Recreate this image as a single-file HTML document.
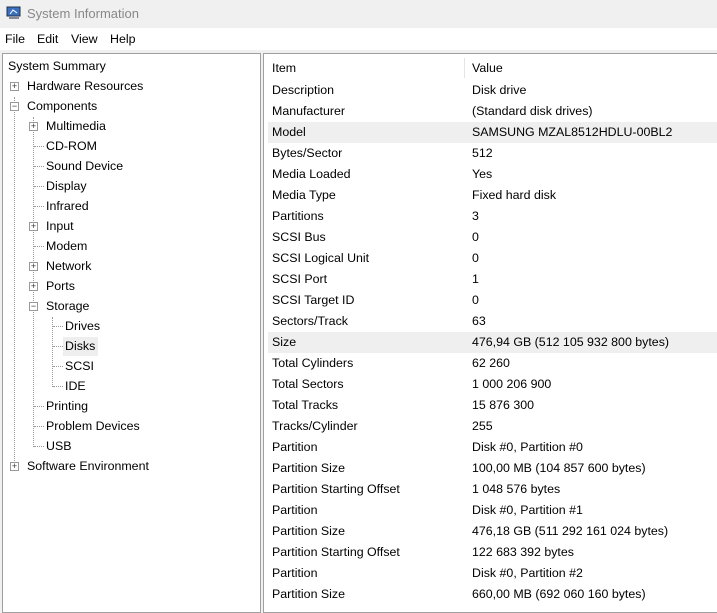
<!DOCTYPE html><html><head><style>
*{margin:0;padding:0;box-sizing:border-box}
body{width:717px;height:602px;overflow:hidden;background:#f0f0f0;font-family:"Liberation Sans",sans-serif;font-size:12.4px;color:#000;position:relative}
.title{position:absolute;left:0;top:0;width:717px;height:28px;background:#f0f0f0;color:#888;font-size:13px}
.title span{position:absolute;left:27px;top:6px}
.menu{position:absolute;left:0;top:28px;width:717px;height:22px;background:#fff}
.menu span{position:absolute;top:4px}
.left{position:absolute;left:2px;top:53px;width:259px;height:560px;background:#fff;border:1px solid #a0a0a0}
.right{position:absolute;left:263px;top:53px;width:460px;height:560px;background:#fff;border:1px solid #a0a0a0}
.t{position:absolute;white-space:nowrap}
.ex{position:absolute;width:9px;height:9px;border:1px solid #999;background:#fff;font-size:9px;line-height:7px;text-align:center;color:#333}
.vl{position:absolute;border-left:1px dotted #999;width:0}
.hl{position:absolute;border-top:1px dotted #999;height:0}
.row{position:absolute;left:4px;width:460px;height:21px}
.row span{position:absolute;top:3px;white-space:nowrap}
.row .v{left:204px}
.row .k{left:4px}
</style></head><body>
<div class="title"><svg style="position:absolute;left:6px;top:5px" width="16" height="16"><rect x="1" y="2" width="13" height="9" fill="#3a6fc0" stroke="#234" /><rect x="3" y="12" width="10" height="2" fill="#889"/><path d="M4 9 L7 5 L11 8" stroke="#fff" fill="none"/></svg><span>System Information</span></div>
<div class="menu"><span style="left:5px">File</span><span style="left:37px">Edit</span><span style="left:71px">View</span><span style="left:110px">Help</span></div>
<div class="left">
<div class="vl" style="left:11px;top:43px;height:370px"></div>
<div class="vl" style="left:30px;top:63px;height:330px"></div>
<div class="vl" style="left:49px;top:263px;height:70px"></div>
<div class="t" style="left:5px;top:5px">System Summary</div>
<div class="ex" style="left:7px;top:28px">+</div><div class="t" style="left:24px;top:25px">Hardware Resources</div>
<div class="ex" style="left:7px;top:48px">−</div><div class="t" style="left:24px;top:45px">Components</div>
<div class="ex" style="left:26px;top:68px">+</div><div class="t" style="left:43px;top:65px">Multimedia</div>
<div class="hl" style="left:31px;top:92px;width:10px"></div><div class="t" style="left:43px;top:85px">CD-ROM</div>
<div class="hl" style="left:31px;top:112px;width:10px"></div><div class="t" style="left:43px;top:105px">Sound Device</div>
<div class="hl" style="left:31px;top:132px;width:10px"></div><div class="t" style="left:43px;top:125px">Display</div>
<div class="hl" style="left:31px;top:152px;width:10px"></div><div class="t" style="left:43px;top:145px">Infrared</div>
<div class="ex" style="left:26px;top:168px">+</div><div class="t" style="left:43px;top:165px">Input</div>
<div class="hl" style="left:31px;top:192px;width:10px"></div><div class="t" style="left:43px;top:185px">Modem</div>
<div class="ex" style="left:26px;top:208px">+</div><div class="t" style="left:43px;top:205px">Network</div>
<div class="ex" style="left:26px;top:228px">+</div><div class="t" style="left:43px;top:225px">Ports</div>
<div class="ex" style="left:26px;top:248px">−</div><div class="t" style="left:43px;top:245px">Storage</div>
<div class="hl" style="left:50px;top:272px;width:10px"></div><div class="t" style="left:62px;top:265px">Drives</div>
<div style="position:absolute;left:60px;top:283px;width:35px;height:19px;background:#eee"></div>
<div class="hl" style="left:50px;top:292px;width:10px"></div><div class="t" style="left:62px;top:285px">Disks</div>
<div class="hl" style="left:50px;top:312px;width:10px"></div><div class="t" style="left:62px;top:305px">SCSI</div>
<div class="hl" style="left:50px;top:332px;width:10px"></div><div class="t" style="left:62px;top:325px">IDE</div>
<div class="hl" style="left:31px;top:352px;width:10px"></div><div class="t" style="left:43px;top:345px">Printing</div>
<div class="hl" style="left:31px;top:372px;width:10px"></div><div class="t" style="left:43px;top:365px">Problem Devices</div>
<div class="hl" style="left:31px;top:392px;width:10px"></div><div class="t" style="left:43px;top:385px">USB</div>
<div class="ex" style="left:7px;top:408px">+</div><div class="t" style="left:24px;top:405px">Software Environment</div>
</div>
<div class="right">
<div style="position:absolute;left:200px;top:4px;height:20px;border-left:1px solid #e5e5e5"></div>
<div class="row" style="top:4px"><span class="k">Item</span><span class="v">Value</span></div>
<div class="row" style="top:26px"><span class="k">Description</span><span class="v">Disk drive</span></div>
<div class="row" style="top:47px"><span class="k">Manufacturer</span><span class="v">(Standard disk drives)</span></div>
<div class="row" style="top:68px;background:#efefef"><span class="k">Model</span><span class="v">SAMSUNG MZAL8512HDLU-00BL2</span></div>
<div class="row" style="top:89px"><span class="k">Bytes/Sector</span><span class="v">512</span></div>
<div class="row" style="top:110px"><span class="k">Media Loaded</span><span class="v">Yes</span></div>
<div class="row" style="top:131px"><span class="k">Media Type</span><span class="v">Fixed hard disk</span></div>
<div class="row" style="top:152px"><span class="k">Partitions</span><span class="v">3</span></div>
<div class="row" style="top:173px"><span class="k">SCSI Bus</span><span class="v">0</span></div>
<div class="row" style="top:194px"><span class="k">SCSI Logical Unit</span><span class="v">0</span></div>
<div class="row" style="top:215px"><span class="k">SCSI Port</span><span class="v">1</span></div>
<div class="row" style="top:236px"><span class="k">SCSI Target ID</span><span class="v">0</span></div>
<div class="row" style="top:257px"><span class="k">Sectors/Track</span><span class="v">63</span></div>
<div class="row" style="top:278px;background:#efefef"><span class="k">Size</span><span class="v">476,94 GB (512 105 932 800 bytes)</span></div>
<div class="row" style="top:299px"><span class="k">Total Cylinders</span><span class="v">62 260</span></div>
<div class="row" style="top:320px"><span class="k">Total Sectors</span><span class="v">1 000 206 900</span></div>
<div class="row" style="top:341px"><span class="k">Total Tracks</span><span class="v">15 876 300</span></div>
<div class="row" style="top:362px"><span class="k">Tracks/Cylinder</span><span class="v">255</span></div>
<div class="row" style="top:383px"><span class="k">Partition</span><span class="v">Disk #0, Partition #0</span></div>
<div class="row" style="top:404px"><span class="k">Partition Size</span><span class="v">100,00 MB (104 857 600 bytes)</span></div>
<div class="row" style="top:425px"><span class="k">Partition Starting Offset</span><span class="v">1 048 576 bytes</span></div>
<div class="row" style="top:446px"><span class="k">Partition</span><span class="v">Disk #0, Partition #1</span></div>
<div class="row" style="top:467px"><span class="k">Partition Size</span><span class="v">476,18 GB (511 292 161 024 bytes)</span></div>
<div class="row" style="top:488px"><span class="k">Partition Starting Offset</span><span class="v">122 683 392 bytes</span></div>
<div class="row" style="top:509px"><span class="k">Partition</span><span class="v">Disk #0, Partition #2</span></div>
<div class="row" style="top:530px"><span class="k">Partition Size</span><span class="v">660,00 MB (692 060 160 bytes)</span></div>
</div>
</body></html>
